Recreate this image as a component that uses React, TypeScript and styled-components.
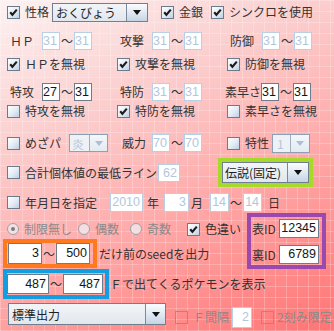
import React from "react";
import styled, { createGlobalStyle } from "styled-components";

const Global = createGlobalStyle`
  html, body { margin: 0; padding: 0; }
  body {
    width: 334px;
    height: 331px;
    overflow: hidden;
    background-color: #ffb0b0;
    background-image:
      linear-gradient(rgba(255,255,255,0.22) 1px, transparent 1px),
      linear-gradient(90deg, rgba(255,255,255,0.22) 1px, transparent 1px),
      linear-gradient(155deg, #fdf2f2 0%, #fbd2d2 28%, #ffaaaa 60%, #ff7474 100%);
    background-size: 11px 11px, 11px 11px, 100% 100%;
    font-family: "Noto Sans CJK JP", sans-serif;
  }
`;

const Page = styled.div`
  width: 334px;
  height: 331px;
  display: flex;
  flex-direction: column;
`;

const Row = styled.div<{ $h: number; $mt?: number; $pl?: number; $align?: string }>`
  display: flex;
  align-items: ${(p) => p.$align ?? "center"};
  height: ${(p) => p.$h}px;
  margin-top: ${(p) => p.$mt ?? 0}px;
  padding-left: ${(p) => p.$pl ?? 0}px;
  flex-shrink: 0;
`;

const Text = styled.span<{ $ml?: number; $w?: number; $muted?: boolean }>`
  display: inline-block;
  flex-shrink: 0;
  margin-left: ${(p) => p.$ml ?? 0}px;
  ${(p) => (p.$w ? `width: ${p.$w}px;` : "")}
  font-family: "Noto Sans CJK JP", sans-serif;
  font-size: 12px;
  line-height: 14px;
  white-space: nowrap;
  color: ${(p) => (p.$muted ? "#8a8a8a" : "#333333")};
`;

const Tilde = styled.span`
  display: inline-block;
  flex-shrink: 0;
  width: 14px;
  text-align: center;
  font-family: "Noto Sans CJK JP", sans-serif;
  font-size: 12px;
  line-height: 14px;
  color: #333333;
`;

const Field = styled.div<{ $w: number; $h: number; $ml?: number; $disabled?: boolean }>`
  box-sizing: border-box;
  flex-shrink: 0;
  width: ${(p) => p.$w}px;
  height: ${(p) => p.$h}px;
  margin-left: ${(p) => p.$ml ?? 0}px;
  border: 1px solid ${(p) => (p.$disabled ? "#b8cfe5" : "#6d7b8b")};
  background: #ffffff;
  font-family: "Liberation Sans", Arial, sans-serif;
  font-size: 12.5px;
  line-height: ${(p) => p.$h - 2}px;
  text-align: right;
  padding-right: 2px;
  color: ${(p) => (p.$disabled ? "#b4c6da" : "#151515")};
  overflow: hidden;
`;

const Box = styled.span<{ $ml?: number; $disabled?: boolean }>`
  box-sizing: border-box;
  flex-shrink: 0;
  display: inline-flex;
  align-items: center;
  justify-content: center;
  width: 13px;
  height: 13px;
  margin-left: ${(p) => p.$ml ?? 0}px;
  border: 1px solid ${(p) => (p.$disabled ? "#8c93a0" : "#6b7b8c")};
  background: ${(p) =>
    p.$disabled
      ? "transparent"
      : "linear-gradient(135deg, #ffffff 0%, #e2ebf4 55%, #bccfe3 100%)"};
`;

const CheckBox = ({ checked, disabled, ml }: { checked?: boolean; disabled?: boolean; ml?: number }) => (
  <Box $ml={ml} $disabled={disabled}>
    {checked && (
      <svg width="11" height="11" viewBox="0 0 11 11">
        <polyline points="2.2,5.2 4.4,7.8 8.8,2.6" fill="none" stroke="#1c1c1c" strokeWidth="2.1" />
      </svg>
    )}
  </Box>
);

const RadioRing = styled.span<{ $ml?: number }>`
  box-sizing: border-box;
  flex-shrink: 0;
  display: inline-flex;
  align-items: center;
  justify-content: center;
  width: 12px;
  height: 12px;
  margin-left: ${(p) => p.$ml ?? 0}px;
  border-radius: 50%;
  border: 1px solid #9aa2ac;
  background: rgba(240, 238, 242, 0.75);
`;

const RadioDot = styled.span`
  width: 4px;
  height: 4px;
  border-radius: 50%;
  background: #7d7d7d;
`;

const Radio = ({ on, ml }: { on?: boolean; ml?: number }) => (
  <RadioRing $ml={ml}>{on && <RadioDot />}</RadioRing>
);

const ComboBox = styled.div<{ $w: number; $h: number; $ml?: number; $disabled?: boolean }>`
  box-sizing: border-box;
  flex-shrink: 0;
  display: flex;
  width: ${(p) => p.$w}px;
  height: ${(p) => p.$h}px;
  margin-left: ${(p) => p.$ml ?? 0}px;
  border: 1px solid ${(p) => (p.$disabled ? "#8fa0b4" : "#6f7f90")};
  background: ${(p) => (p.$disabled ? "#eef2f6" : "linear-gradient(#f2f5f8, #e2e7ed)")};
`;

const ComboText = styled.span<{ $disabled?: boolean; $pl?: number }>`
  flex: 1;
  display: flex;
  align-items: center;
  padding-left: ${(p) => p.$pl ?? 3}px;
  font-family: "Noto Sans CJK JP", sans-serif;
  font-size: 12px;
  white-space: nowrap;
  overflow: hidden;
  color: ${(p) => (p.$disabled ? "#b4c6da" : "#1e1e1e")};
`;

const ComboButton = styled.span<{ $w: number; $disabled?: boolean }>`
  flex-shrink: 0;
  display: flex;
  align-items: center;
  justify-content: center;
  width: ${(p) => p.$w}px;
  border-left: 1px solid ${(p) => (p.$disabled ? "#9fb0c3" : "#7a8a99")};
  background: ${(p) =>
    p.$disabled ? "linear-gradient(#f4f7fa, #e3eaf1)" : "linear-gradient(#fbfdff, #dde7f1 55%, #c5d4e4)"};
`;

const Arrow = styled.span<{ $disabled?: boolean }>`
  width: 0;
  height: 0;
  border-left: 4.5px solid transparent;
  border-right: 4.5px solid transparent;
  border-top: 5px solid ${(p) => (p.$disabled ? "#a9c0d8" : "#111111")};
`;

const Combo = ({
  w,
  h,
  bw,
  ml,
  disabled,
  pl,
  children,
}: {
  w: number;
  h: number;
  bw: number;
  ml?: number;
  disabled?: boolean;
  pl?: number;
  children: React.ReactNode;
}) => (
  <ComboBox $w={w} $h={h} $ml={ml} $disabled={disabled}>
    <ComboText $disabled={disabled} $pl={pl}>{children}</ComboText>
    <ComboButton $w={bw} $disabled={disabled}>
      <Arrow $disabled={disabled} />
    </ComboButton>
  </ComboBox>
);

const Frame = styled.div<{ $color: string; $w: number; $h: number; $ml?: number; $pad?: string }>`
  box-sizing: border-box;
  flex-shrink: 0;
  display: flex;
  align-items: center;
  width: ${(p) => p.$w}px;
  height: ${(p) => p.$h}px;
  margin-left: ${(p) => p.$ml ?? 0}px;
  border: 4px solid ${(p) => p.$color};
  padding: ${(p) => p.$pad ?? "0"};
`;

const CheckCell = styled.div`
  display: flex;
  align-items: center;
  width: 110px;
  flex-shrink: 0;
`;

const Split = styled.div`
  display: flex;
  height: 56px;
  margin-top: 1px;
  flex-shrink: 0;
`;

const LeftCol = styled.div`
  box-sizing: border-box;
  width: 247px;
  display: flex;
  flex-direction: column;
  padding-top: 6px;
`;

const IdFrame = styled.div`
  box-sizing: border-box;
  width: 79px;
  height: 56px;
  border: 4px solid #9a4aae;
  display: flex;
  flex-direction: column;
  gap: 7px;
  padding-top: 2px;
`;

const IdRow = styled.div`
  display: flex;
  align-items: center;
  height: 19px;
`;

const Aside = styled.div`
  display: flex;
  align-items: center;
  height: 22px;
  margin-top: 3px;
`;

const Stat = ({
  label,
  lw = 32,
  ml,
  a,
  b,
  disabled,
}: {
  label: string;
  lw?: number;
  ml?: number;
  a: string;
  b: string;
  disabled?: boolean;
}) => (
  <>
    <Text $ml={ml} $w={lw}>
      {label}
    </Text>
    <Field $w={18} $h={18} $disabled={disabled}>
      {a}
    </Field>
    <Tilde>～</Tilde>
    <Field $w={18} $h={18} $disabled={disabled}>
      {b}
    </Field>
  </>
);

const Cell = ({ label, checked }: { label: string; checked?: boolean }) => (
  <CheckCell>
    <CheckBox checked={checked} />
    <Text $ml={5}>{label}</Text>
  </CheckCell>
);

export default function App() {
  return (
    <>
      <Global />
      <Page>
        <Row $h={20} $mt={2} $pl={7}>
          <CheckBox checked />
          <Text $ml={5}>性格</Text>
          <Combo w={96} h={19} bw={20} ml={3}>
            おくびょう
          </Combo>
          <CheckBox checked ml={13} />
          <Text $ml={5}>金銀</Text>
          <CheckBox checked ml={8} />
          <Text $ml={5}>シンクロを使用</Text>
        </Row>

        <Row $h={18} $mt={10} $pl={10}>
          <Stat label="ＨＰ" a="31" b="31" disabled />
          <Stat label="攻撃" ml={28} a="31" b="31" disabled />
          <Stat label="防御" ml={28} a="31" b="31" disabled />
        </Row>

        <Row $h={16} $mt={6} $pl={7}>
          <Cell label="ＨＰを無視" checked />
          <Cell label="攻撃を無視" checked />
          <Cell label="防御を無視" checked />
        </Row>

        <Row $h={18} $mt={11} $pl={10}>
          <Stat label="特攻" a="27" b="31" />
          <Stat label="特防" ml={28} a="31" b="31" disabled />
          <Stat label="素早さ" lw={36} ml={23} a="31" b="31" />
        </Row>

        <Row $h={16} $mt={2} $pl={7}>
          <Cell label="特攻を無視" />
          <Cell label="特防を無視" checked />
          <Cell label="素早さを無視" />
        </Row>

        <Row $h={20} $mt={14} $pl={7}>
          <CheckBox />
          <Text $ml={5}>めざパ</Text>
          <Combo w={39} h={18} bw={17} ml={8} disabled pl={2}>
            炎
          </Combo>
          <Text $ml={14} $w={30}>
            威力
          </Text>
          <Field $w={18} $h={18} $disabled>
            70
          </Field>
          <Tilde>～</Tilde>
          <Field $w={18} $h={18} $disabled>
            70
          </Field>
          <CheckBox ml={25} />
          <Text $ml={5}>特性</Text>
          <Combo w={38} h={19} bw={18} ml={3} disabled pl={4}>
            1
          </Combo>
        </Row>

        <Row $h={29} $mt={5} $pl={7}>
          <CheckBox />
          <Text $ml={5}>合計個体値の最低ライン</Text>
          <Field $w={22} $h={18} $ml={1} $disabled>
            62
          </Field>
          <Frame $color="#a6d92a" $w={95} $h={29} $ml={38}>
            <Combo w={87} h={21} bw={20} pl={2}>
              伝説(固定)
            </Combo>
          </Frame>
        </Row>

        <Row $h={19} $mt={6} $pl={7}>
          <CheckBox />
          <Text $ml={5}>年月日を指定</Text>
          <Field $w={33} $h={19} $ml={13} $disabled>
            2010
          </Field>
          <Text $ml={4}>年</Text>
          <Field $w={25} $h={19} $ml={5} $disabled>
            3
          </Field>
          <Text $ml={2}>月</Text>
          <Field $w={19} $h={19} $ml={7} $disabled>
            14
          </Field>
          <Tilde>～</Tilde>
          <Field $w={19} $h={19} $disabled>
            14
          </Field>
          <Text $ml={6}>日</Text>
        </Row>

        <Split>
          <LeftCol>
            <Row $h={20} $pl={7}>
              <Radio on />
              <Text $ml={5} $muted>
                制限無し
              </Text>
              <Radio ml={6} />
              <Text $ml={5} $muted>
                偶数
              </Text>
              <Radio ml={11} />
              <Text $ml={5} $muted>
                奇数
              </Text>
              <CheckBox checked ml={16} />
              <Text $ml={5}>色違い</Text>
            </Row>
            <Row $h={29} $pl={3}>
              <Frame $color="#ff7a1e" $w={94} $h={29} $pad="0 3px 0 1px">
                <Field $w={34} $h={21}>
                  3
                </Field>
                <Tilde>～</Tilde>
                <Field $w={34} $h={21}>
                  500
                </Field>
              </Frame>
              <Text $ml={2}>だけ前のseedを出力</Text>
            </Row>
          </LeftCol>
          <IdFrame>
            <IdRow>
              <Text $ml={1} $w={27}>
                表ID
              </Text>
              <Field $w={40} $h={19}>
                12345
              </Field>
            </IdRow>
            <IdRow>
              <Text $ml={1} $w={27}>
                裏ID
              </Text>
              <Field $w={40} $h={19}>
                6789
              </Field>
            </IdRow>
          </IdFrame>
        </Split>

        <Row $h={30} $pl={3}>
          <Frame $color="#139ee0" $w={106} $h={30} $pad="0 2px 0 0">
            <Field $w={42} $h={20}>
              487
            </Field>
            <Tilde>～</Tilde>
            <Field $w={40} $h={20}>
              487
            </Field>
          </Frame>
          <Text $ml={1}>Ｆで出てくるポケモンを表示</Text>
        </Row>

        <Row $h={25} $mt={4} $pl={8} $align="flex-start">
          <Combo w={158} h={22} bw={19}>
            標準出力
          </Combo>
          <Aside>
            <CheckBox disabled ml={9} />
            <Text $ml={5} $muted>
              Ｆ間隔
            </Text>
            <Field $w={20} $h={21} $ml={3} $disabled>
              2
            </Field>
            <CheckBox disabled ml={9} />
            <Text $ml={3} $muted>
              2刻み限定
            </Text>
          </Aside>
        </Row>
      </Page>
    </>
  );
}
